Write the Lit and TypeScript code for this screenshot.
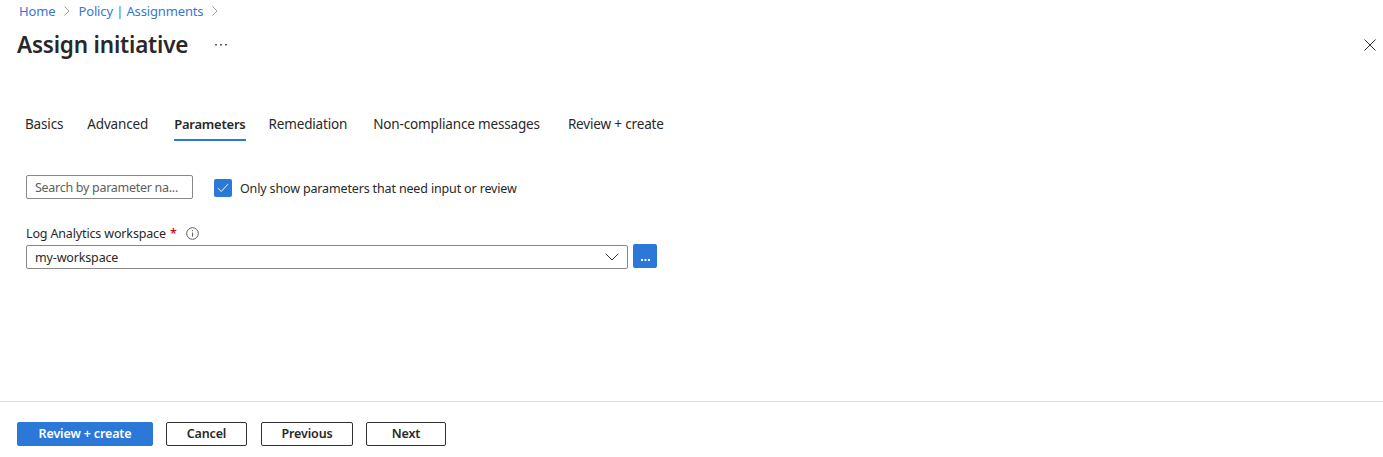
import { LitElement, html, css } from "lit";
import { customElement } from "lit/decorators.js";

const chevron = html`<svg class="crumb-sep" width="8" height="12" viewBox="0 0 8 12"><path d="M1.5 1.5 6 6l-4.5 4.5" fill="none" stroke="#a0a0a0" stroke-width="1"/></svg>`;

@customElement("app-root")
export class AppRoot extends LitElement {
  static styles = css`
    :host { display: flex; flex-direction: column; width: 1383px; height: 457px; background: #fff; color: #292827; font-family: "Noto Sans", "Open Sans", sans-serif; font-size: 12.5px; letter-spacing: -0.15px; overflow: hidden; }
    .crumbs { display: flex; align-items: center; height: 22px; padding-left: 19px; color: #3a76d2; font-size: 13px; }
    .crumbs span { letter-spacing: -0.14px; }
    .crumb-sep { margin: 0 7px 0 8px; }
    .head { display: flex; align-items: center; height: 46px; padding-left: 17px; }
    h1 { margin: 0; font-size: 22.5px; line-height: 46px; font-weight: 600; letter-spacing: -0.2px; color: #292827; }
    .more { margin-left: 27px; display: block; }
    .close { margin-left: auto; margin-right: 7px; display: block; }
    .tabs { display: flex; margin-top: 36px; padding-left: 25px; height: 37px; }
    .tab { height: 37px; padding-top: 4px; line-height: 33px; box-sizing: border-box; font-size: 13.5px; letter-spacing: -0.16px; white-space: nowrap; }
    .tab.active { font-size: 13px; letter-spacing: -0.22px; font-weight: 600; border-bottom: 2px solid #2b78d8; }
    .t1 { margin-right: 24px; }
    .t2 { margin-right: 26px; }
    .t3 { margin-right: 23px; }
    .t4 { margin-right: 26px; }
    .t5 { margin-right: 28px; }
    .filter { display: flex; align-items: center; margin-top: 34px; padding-left: 26px; height: 26px; }
    .search { box-sizing: border-box; width: 167px; height: 24px; border: 1px solid #8a8886; border-radius: 2px; padding-left: 8px; line-height: 24px; color: #605e5c; white-space: nowrap; overflow: hidden; letter-spacing: -0.28px; margin-top: -3px; }
    .check { display: flex; align-items: center; margin-left: 21px; }
    .box { width: 18px; height: 18px; border-radius: 2px; background: #2b78d8; margin-right: 8px; display: flex; align-items: center; justify-content: center; }
    .label { display: flex; align-items: center; margin-top: 20px; padding-left: 26px; height: 24px; }
    .star { color: #c50f1f; margin-left: 4px; font-weight: 600; }
    .info { margin-left: 9px; display: block; }
    .field { display: flex; padding-left: 26px; }
    .select { box-sizing: border-box; width: 602px; height: 24px; border: 1px solid #8a8886; border-radius: 2px; padding: 0 8px 0 8px; display: flex; align-items: center; justify-content: space-between; }
    .browse { width: 24px; height: 24px; margin: -1px 0 0 5px; background: #2b78d8; border-radius: 2px; display: flex; align-items: flex-end; justify-content: center; padding-bottom: 7px; box-sizing: border-box; }
    .spacer { flex: 1; }
    .footer { display: flex; align-items: center; height: 56px; box-sizing: border-box; padding: 9px 0 0 17px; border-top: 1px solid #e1e1e1; }
    .btn { box-sizing: border-box; height: 24px; margin-right: 13px; padding-bottom: 1px; border: 1px solid #323130; border-radius: 2px; display: flex; align-items: center; justify-content: center; font-weight: 600; font-size: 12.5px; letter-spacing: -0.15px; }
    .btn.primary { background: #2b78d8; border-color: #2b78d8; color: #fff; width: 136px; }
    .cancel { width: 81px; margin-right: 14px; }
    .previous { width: 92px; }
    .next { width: 80px; }
  `;

  render() {
    return html`
      <nav class="crumbs"><span>Home</span>${chevron}<span>Policy | Assignments</span>${chevron}</nav>
      <div class="head">
        <h1>Assign initiative</h1>
        <svg class="more" width="12" height="4" viewBox="0 0 12 4"><g fill="#605e5c"><rect x="0" y="1" width="2" height="1.5"/><rect x="5" y="1" width="2" height="1.5"/><rect x="10" y="1" width="2" height="1.5"/></g></svg>
        <svg class="close" width="12" height="12" viewBox="0 0 12 12"><path d="M.5.5l11 11M11.5.5l-11 11" stroke="#323130" stroke-width="1" fill="none"/></svg>
      </div>
      <div class="tabs">
        <div class="tab t1">Basics</div>
        <div class="tab t2">Advanced</div>
        <div class="tab active t3">Parameters</div>
        <div class="tab t4">Remediation</div>
        <div class="tab t5">Non-compliance messages</div>
        <div class="tab">Review + create</div>
      </div>
      <div class="filter">
        <div class="search">Search by parameter na...</div>
        <div class="check">
          <div class="box"><svg width="12" height="10" viewBox="0 0 12 10"><path d="M1 5.2 4.2 8.5 11 1.2" fill="none" stroke="#fff" stroke-width="1"/></svg></div>
          Only show parameters that need input or review
        </div>
      </div>
      <div class="label">Log Analytics workspace<span class="star">*</span>
        <svg class="info" width="13" height="13" viewBox="0 0 13 13"><circle cx="6.5" cy="6.5" r="5.8" fill="none" stroke="#605e5c" stroke-width="1"/><path d="M6.5 5.6v4" stroke="#605e5c" stroke-width="1"/><rect x="6" y="3.2" width="1" height="1" fill="#605e5c"/></svg>
      </div>
      <div class="field">
        <div class="select"><span>my-workspace</span>
          <svg width="14" height="8" viewBox="0 0 14 8"><path d="M.7.7 7 7l6.3-6.3" fill="none" stroke="#323130" stroke-width="1"/></svg>
        </div>
        <div class="browse"><svg width="9" height="2" viewBox="0 0 9 2"><g fill="#fff"><rect x="0" y="0" width="2" height="2"/><rect x="3.5" y="0" width="2" height="2"/><rect x="7" y="0" width="2" height="2"/></g></svg></div>
      </div>
      <div class="spacer"></div>
      <div class="footer">
        <div class="btn primary">Review + create</div>
        <div class="btn cancel">Cancel</div>
        <div class="btn previous">Previous</div>
        <div class="btn next">Next</div>
      </div>
    `;
  }
}
